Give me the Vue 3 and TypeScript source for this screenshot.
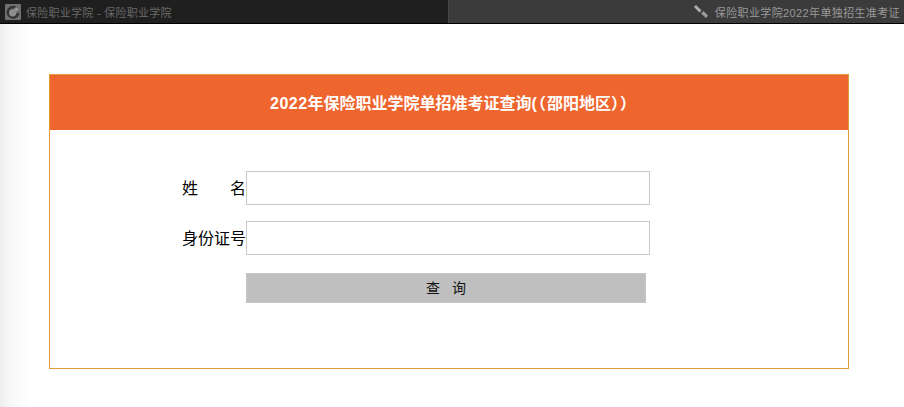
<script setup lang="ts">
import { ref } from 'vue';

const name = ref('');
const idCard = ref('');
</script>

<template>
    <div class="page">
        <div class="tabs">
            <div class="tab tab-left">
                <svg class="logo" viewBox="0 0 16 16" width="16" height="16">
                    <rect width="16" height="16" rx="1" fill="#707070" />
                    <path d="M11 2.6 A6.4 6.4 0 1 0 14.4 9 L11.8 9 A3.9 3.9 0 1 1 9 4.6 Z" fill="#333" />
                    <circle cx="7.6" cy="9" r="3.4" fill="#8e8e8e" />
                    <circle cx="11.4" cy="5.4" r="1.7" fill="#9c9c9c" />
                </svg>
                <span>保险职业学院 - 保险职业学院</span>
            </div>
            <div class="tab tab-right">
                <svg class="pin" viewBox="0 0 16 16" width="16" height="16">
                    <path d="M1 3 L3 1 L8.5 6.5 L6.5 8.5 Z" fill="#b0b0b0" />
                    <path d="M8 9.5 L10.5 7 L15 11.5 L13 14 Z" fill="#9a9a9a" />
                </svg>
                <span>保险职业学院2022年单独招生准考证</span>
            </div>
        </div>
        <div class="content">
            <div class="card">
                <div class="card-title"><span class="year">2022</span>年保险职业学院单招准考证查询<span class="paren">(（</span>邵阳地区<span class="paren">））</span></div>
                <form class="card-form" @submit.prevent>
                    <div class="row">
                        <label class="label label-name"><span>姓</span><span>名</span></label>
                        <input v-model="name" class="field" type="text" />
                    </div>
                    <div class="row">
                        <label class="label">身份证号</label>
                        <input v-model="idCard" class="field" type="text" />
                    </div>
                    <button class="submit" type="submit"><span>查</span><span>询</span></button>
                </form>
            </div>
        </div>
    </div>
</template>

<style>
html,
body {
    margin: 0;
    background: #fff;
}
</style>

<style scoped>
.page {
    width: 904px;
    height: 407px;
    overflow: hidden;
    font-family: "Liberation Sans", "Noto Sans CJK SC", sans-serif;
}

.tabs {
    display: flex;
    height: 23px;
    border-bottom: 1px solid #000;
    font-size: 11px;
    letter-spacing: .27px;
}

.tab {
    display: flex;
    align-items: center;
    box-sizing: border-box;
}

.tab-left {
    width: 448px;
    gap: 5px;
    padding-left: 5px;
    background: #1f1f1f;
    color: #696969;
}

.tab-right {
    flex: 1;
    gap: 6px;
    justify-content: flex-end;
    padding-right: 4px;
    letter-spacing: .37px;
    background: #3b3b3b;
    border-left: 1px solid #4a4a4a;
    color: #999;
}

.content {
    height: 383px;
    padding: 50px 55px 0 49px;
    box-sizing: border-box;
    background: linear-gradient(to right, #eeeeee, #f9f9f9 12px, #fff 30px);
}

.card {
    width: 800px;
    height: 295px;
    box-sizing: border-box;
    border: 1px solid #e09c38;
    background: #fff;
}

.card-title {
    height: 55px;
    line-height: 58px;
    padding-left: 9px;
    text-align: center;
    background: #ef652e;
    color: #fff;
    font-size: 16px;
    font-weight: bold;
}

.year {
    letter-spacing: .5px;
}

.paren {
    letter-spacing: 1px;
}

.card-form {
    display: flex;
    flex-direction: column;
    padding: 41px 0 0 132px;
}

.row {
    display: flex;
    align-items: center;
    height: 34px;
    margin-bottom: 16px;
}

.label {
    width: 64px;
    padding-bottom: 2px;
    font-size: 16px;
    color: #000;
}

.label-name {
    display: flex;
    justify-content: space-between;
}

.field {
    width: 404px;
    height: 34px;
    box-sizing: border-box;
    border: 1px solid #c8c8c8;
    outline: none;
    background: #fff;
    padding: 0 6px;
}

.submit {
    display: flex;
    justify-content: center;
    align-items: center;
    gap: 12px;
    width: 400px;
    height: 30px;
    margin: 2px 0 0 64px;
    padding: 0 0 2px;
    box-sizing: border-box;
    border: 1px solid #c6c6c6;
    background: #bfbfbf;
    color: #111;
    font-family: inherit;
    font-size: 14px;
}
</style>
